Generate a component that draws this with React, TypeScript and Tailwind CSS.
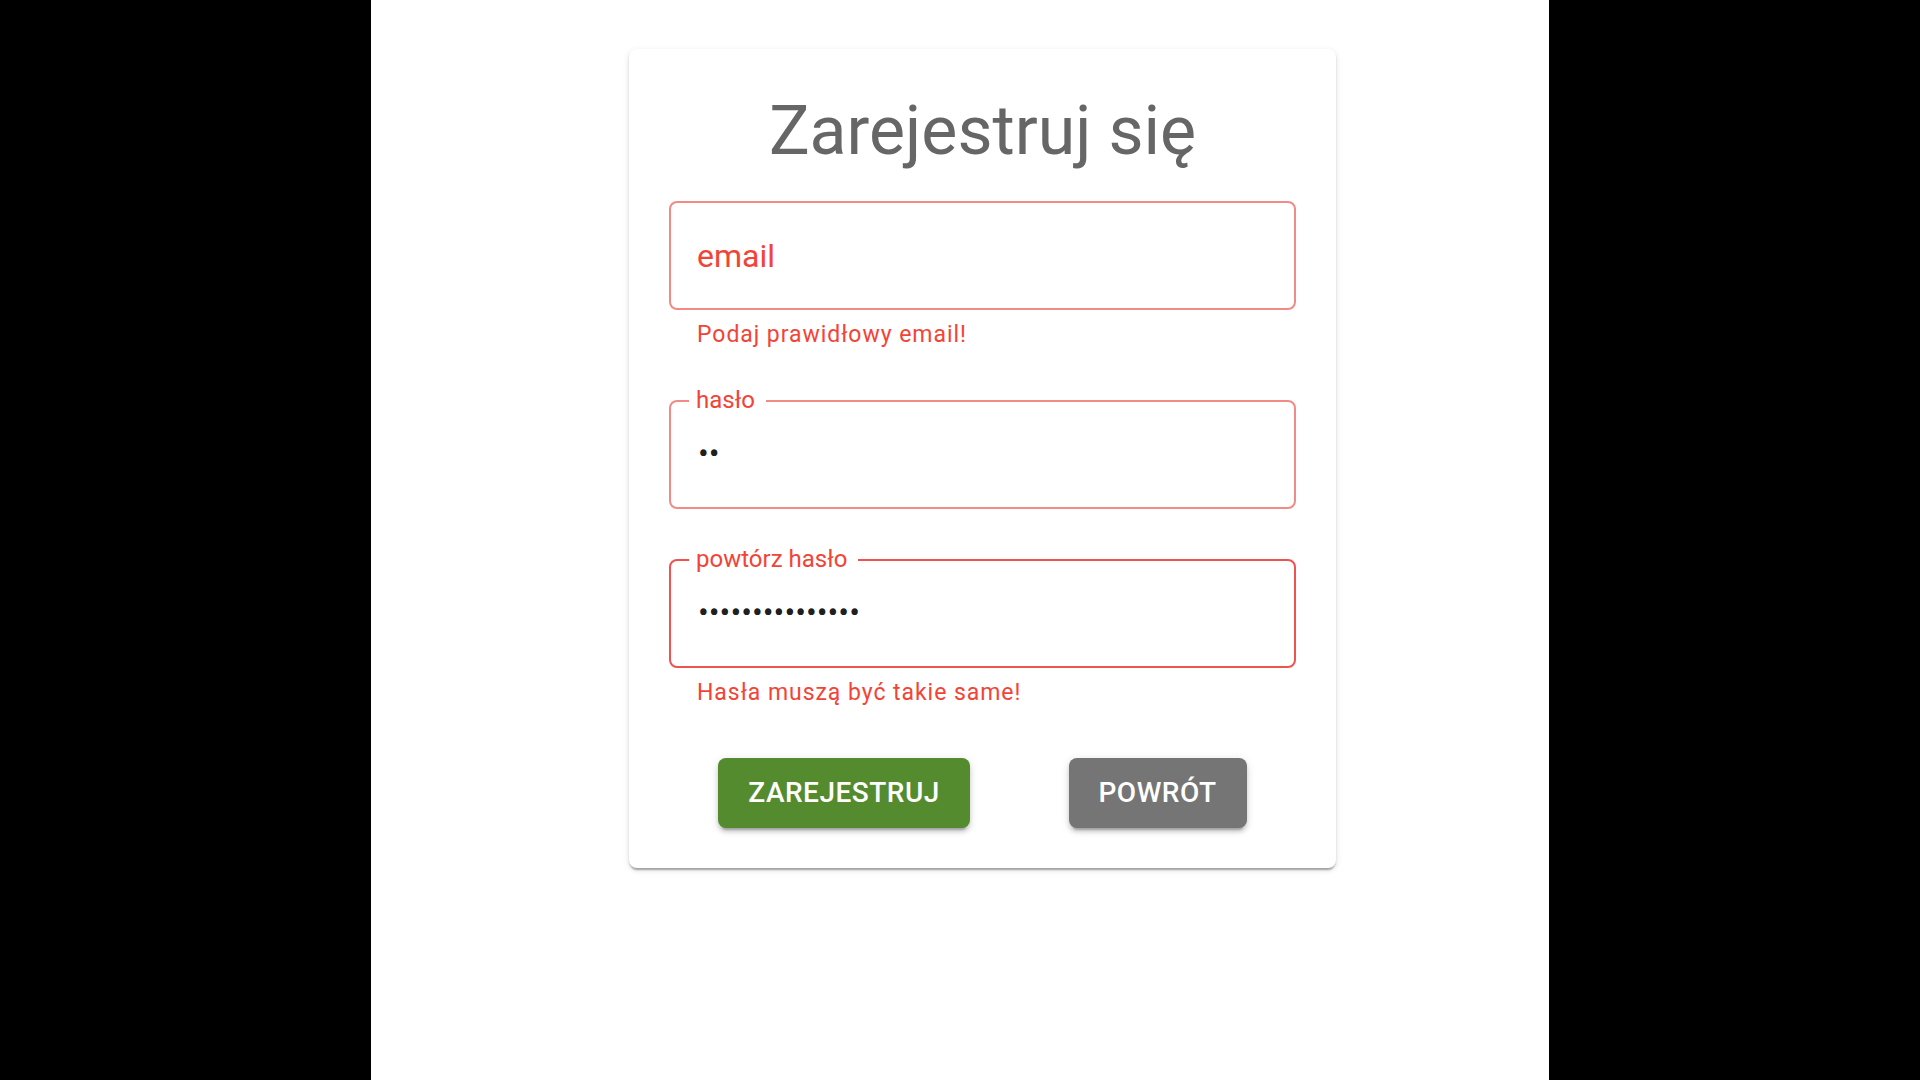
import React from 'react';

const errorText = 'text-[#f44336]';

function Field({
  label,
  value,
  floating,
  borderClass,
  helper,
  className,
}: {
  label: string;
  value?: string;
  floating: boolean;
  borderClass: string;
  helper?: string;
  className?: string;
}) {
  return (
    <div className={className}>
      <div className={`relative h-[109px] rounded-[8px] border-2 ${borderClass} flex items-center`}>
        {floating ? (
          <>
            <span
              className={`absolute left-[18px] top-0 -translate-y-[14px] bg-white pl-[7px] pr-[11px] text-[24px] leading-[24px] ${errorText}`}
            >
              {label}
            </span>
            <input
              type="password"
              readOnly
              value={value}
              className="w-full bg-transparent pb-[3px] pl-[27px] pr-[28px] text-[32px] text-black/90 outline-none"
              style={{ fontFamily: 'Roboto, "Liberation Sans", sans-serif' }}
            />
          </>
        ) : (
          <span className={`pl-[26px] text-[32px] ${errorText}`}>{label}</span>
        )}
      </div>
      {helper && (
        <p className={`ml-[28px] mt-[5px] text-[23px] leading-[40px] tracking-[0.95px] ${errorText}`}>{helper}</p>
      )}
    </div>
  );
}

export default function App() {
  return (
    <div
      className="flex min-h-[1080px] w-full bg-black"
      style={{ fontFamily: 'Roboto, "Liberation Sans", sans-serif' }}
    >
      <div className="w-[371px] shrink-0 bg-black" />
      <main className="flex-1 bg-white">
        <div className="ml-[258px] mt-[49px] w-[707px] rounded-[8px] bg-white px-[40px] pt-[40px] pb-[40px] shadow-[0_4px_2px_-2px_rgba(0,0,0,0.2),0_2px_2px_0_rgba(0,0,0,0.14),0_2px_6px_0_rgba(0,0,0,0.12)]">
          <h1 className="text-center text-[68px] leading-[84px] font-normal text-[#666666]">Zarejestruj się</h1>

          <Field
            className="mt-[28px]"
            label="email"
            floating={false}
            borderClass="border-[#f28a85]"
            helper="Podaj prawidłowy email!"
          />
          <Field
            className="mt-[45px]"
            label="hasło"
            value="ab"
            floating
            borderClass="border-[#f28a85]"
          />
          <Field
            className="mt-[50px]"
            label="powtórz hasło"
            value="abcdefghijklmno"
            floating
            borderClass="border-[#ef5350]"
            helper="Hasła muszą być takie same!"
          />

          <div className="mt-[45px] flex justify-around">
            <button className="h-[70px] rounded-[8px] bg-[#558b2f] px-[30px] text-[28px] font-medium uppercase tracking-[0.5px] text-white shadow-[0_6px_2px_-4px_rgba(0,0,0,0.2),0_4px_4px_0_rgba(0,0,0,0.14),0_2px_10px_0_rgba(0,0,0,0.12)]">
              Zarejestruj
            </button>
            <button className="h-[70px] rounded-[8px] bg-[#757575] px-[30px] text-[28px] font-medium uppercase tracking-[0.5px] text-white shadow-[0_6px_2px_-4px_rgba(0,0,0,0.2),0_4px_4px_0_rgba(0,0,0,0.14),0_2px_10px_0_rgba(0,0,0,0.12)]">
              Powrót
            </button>
          </div>
        </div>
      </main>
      <div className="w-[371px] shrink-0 bg-black" />
    </div>
  );
}
